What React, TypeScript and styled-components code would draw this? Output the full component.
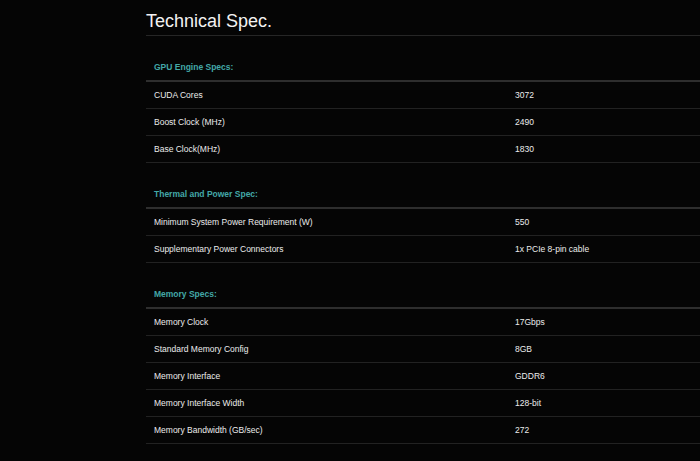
import React from 'react';
import styled, { createGlobalStyle } from 'styled-components';

const Global = createGlobalStyle`
  html, body {
    margin: 0;
    padding: 0;
    background: #050505;
  }
  body {
    font-family: "Liberation Sans", Arial, sans-serif;
    color: #e6e6e6;
  }
`;

const Page = styled.main`
  min-height: 461px;
  padding-left: 146px;
  overflow: hidden;
`;

const Title = styled.h1`
  margin: 0;
  padding: 9px 0 2px;
  font-size: 18px;
  line-height: 24px;
  font-weight: 400;
  color: #f2f2f2;
  border-bottom: 1px solid #262626;
`;

const SectionHead = styled.h2`
  margin: 0;
  padding: 25px 8px 7px;
  font-size: 8.5px;
  line-height: 12px;
  font-weight: 700;
  color: #43a8a7;
  border-bottom: 2px solid #2e2e2e;
`;

const Row = styled.div`
  display: grid;
  grid-template-columns: 361px 1fr;
  align-items: center;
  height: 26px;
  padding-left: 8px;
  border-bottom: 1px solid #222;
  font-size: 8.5px;
  color: #ececec;
`;

const Cell = styled.span`
  white-space: nowrap;
`;

type Spec = [string, string];

const sections: { title: string; rows: Spec[] }[] = [
  {
    title: 'GPU Engine Specs:',
    rows: [
      ['CUDA Cores', '3072'],
      ['Boost Clock (MHz)', '2490'],
      ['Base Clock(MHz)', '1830'],
    ],
  },
  {
    title: 'Thermal and Power Spec:',
    rows: [
      ['Minimum System Power Requirement (W)', '550'],
      ['Supplementary Power Connectors', '1x PCIe 8-pin cable'],
    ],
  },
  {
    title: 'Memory Specs:',
    rows: [
      ['Memory Clock', '17Gbps'],
      ['Standard Memory Config', '8GB'],
      ['Memory Interface', 'GDDR6'],
      ['Memory Interface Width', '128-bit'],
      ['Memory Bandwidth (GB/sec)', '272'],
    ],
  },
];

const App: React.FC = () => (
  <>
    <Global />
    <Page>
      <Title>Technical Spec.</Title>
      {sections.map((s) => (
        <section key={s.title}>
          <SectionHead>{s.title}</SectionHead>
          {s.rows.map(([label, value]) => (
            <Row key={label}>
              <Cell>{label}</Cell>
              <Cell>{value}</Cell>
            </Row>
          ))}
        </section>
      ))}
    </Page>
  </>
);

export default App;
